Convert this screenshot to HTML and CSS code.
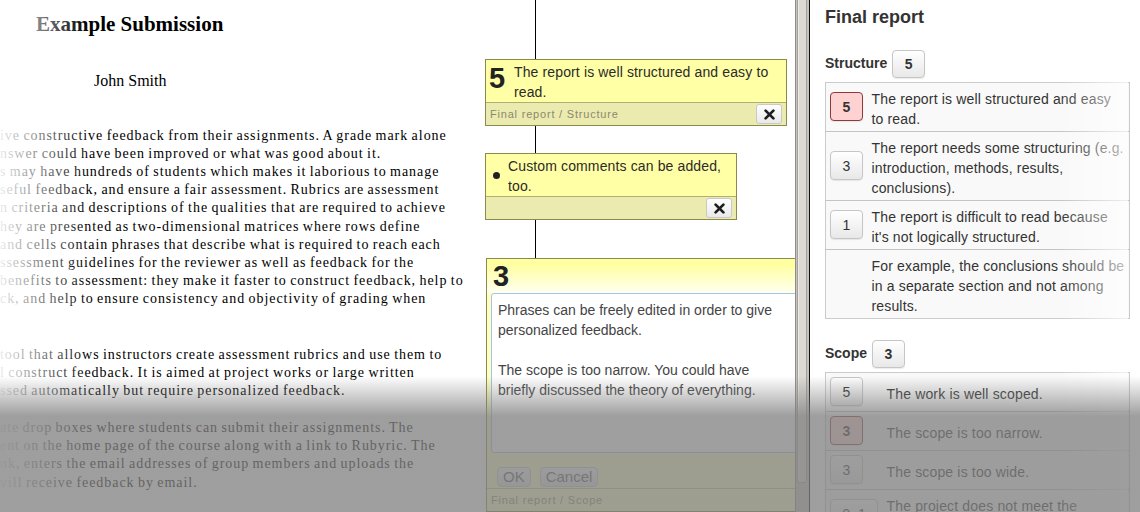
FILE: index.html
```html
<!DOCTYPE html>
<html lang="en">
<head>
<meta charset="utf-8">
<title>Rubyric – Example Submission</title>
<link rel="stylesheet" href="styles.css">
</head>
<body>
<div class="app">
  <main class="doc">
    <section class="page">
      <h1 class="title">Example Submission</h1>
      <p class="author">John Smith</p>
      <p class="para p1">ive constructive feedback from their assignments. A grade mark alone<br>nswer could have been improved or what was good about it.<br>s may have hundreds of students which makes it laborious to manage<br>seful feedback, and ensure a fair assessment. Rubrics are assessment<br>n criteria and descriptions of the qualities that are required to achieve<br>hey are presented as two-dimensional matrices where rows define<br>and cells contain phrases that describe what is required to reach each<br>ssessment guidelines for the reviewer as well as feedback for the<br>benefits to assessment: they make it faster to construct feedback, help to<br>ck, and help to ensure consistency and objectivity of grading when</p>
      <p class="para p2">tool that allows instructors create assessment rubrics and use them to<br>l construct feedback. It is aimed at project works or large written<br>ssed automatically but require personalized feedback.</p>
      <p class="para p3">ate drop boxes where students can submit their assignments. The<br>ent on the home page of the course along with a link to Rubyric. The<br>nk, enters the email addresses of group members and uploads the<br>vill receive feedback by email.</p>
    </section>

    <aside class="notes">
      <div class="note note-graded">
        <div class="note-head">
          <span class="note-grade">5</span>
          <span class="note-text">The report is well structured and easy to read.</span>
        </div>
        <div class="note-foot">
          <span class="note-path">Final report / Structure</span>
          <button class="close-btn" type="button" aria-label="Remove"><svg width="11" height="11" viewBox="0 0 11 11"><path d="M1.6 1.6 L9.4 9.4 M9.4 1.6 L1.6 9.4" stroke="#1e1e1e" stroke-width="2.7" stroke-linecap="round"/></svg></button>
        </div>
      </div>

      <div class="note note-custom">
        <div class="note-head">
          <span class="note-bullet"></span>
          <span class="note-text">Custom comments can be added, too.</span>
        </div>
        <div class="note-foot">
          <span class="note-path"></span>
          <button class="close-btn" type="button" aria-label="Remove"><svg width="11" height="11" viewBox="0 0 11 11"><path d="M1.6 1.6 L9.4 9.4 M9.4 1.6 L1.6 9.4" stroke="#1e1e1e" stroke-width="2.7" stroke-linecap="round"/></svg></button>
        </div>
      </div>

      <div class="note note-edit">
        <div class="edit-head"><span class="note-grade">3</span></div>
        <div class="edit-body">
          <div class="edit-area">Phrases can be freely edited in order to give<br>personalized feedback.<br><br>The scope is too narrow. You could have<br>briefly discussed the theory of everything.</div>
          <div class="edit-actions">
            <button class="act-btn" type="button">OK</button>
            <button class="act-btn" type="button">Cancel</button>
          </div>
        </div>
        <div class="note-foot">
          <span class="note-path">Final report / Scope</span>
        </div>
      </div>
    </aside>

    <div class="fade-left"></div>
  </main>

  <div class="scrollbar"><div class="thumb"></div></div>

  <section class="rubric">
    <h2 class="rubric-title">Final report</h2>

    <div class="crit-head">
      <span class="crit-name">Structure</span>
      <button class="grade-btn strong" type="button">5</button>
    </div>
    <table class="phrases">
      <colgroup><col class="col-btn"><col></colgroup>
      <tr>
        <td class="bcell"><button class="grade-btn selected" type="button">5</button></td>
        <td class="tcell">The report is well structured and easy<br>to read.</td>
      </tr>
      <tr>
        <td class="bcell"><button class="grade-btn" type="button">3</button></td>
        <td class="tcell">The report needs some structuring (e.g.<br>introduction, methods, results,<br>conclusions).</td>
      </tr>
      <tr>
        <td class="bcell"><button class="grade-btn" type="button">1</button></td>
        <td class="tcell">The report is difficult to read because<br>it's not logically structured.</td>
      </tr>
      <tr>
        <td class="bcell"></td>
        <td class="tcell">For example, the conclusions should be<br>in a separate section and not among<br>results.</td>
      </tr>
    </table>

    <div class="crit-head scope">
      <span class="crit-name">Scope</span>
      <button class="grade-btn strong" type="button">3</button>
    </div>
    <table class="phrases wide-btns">
      <colgroup><col class="col-btn"><col></colgroup>
      <tr>
        <td class="bcell"><button class="grade-btn" type="button">5</button></td>
        <td class="tcell">The work is well scoped.</td>
      </tr>
      <tr>
        <td class="bcell"><button class="grade-btn selected" type="button">3</button></td>
        <td class="tcell">The scope is too narrow.</td>
      </tr>
      <tr>
        <td class="bcell"><button class="grade-btn" type="button">3</button></td>
        <td class="tcell">The scope is too wide.</td>
      </tr>
      <tr>
        <td class="bcell"><button class="grade-btn wide" type="button">0–1</button></td>
        <td class="tcell">The project does not meet the<br>requirements.</td>
      </tr>
    </table>

    <div class="fade-right"></div>
  </section>
</div>
<div class="shade"></div>
</body>
</html>
```

FILE: styles.css
```css
html, body {
  margin: 0;
  padding: 0;
}
body {
  width: 1140px;
  height: 512px;
  overflow: hidden;
  background: #fff;
  font-family: "Liberation Sans", Arial, sans-serif;
  color: #333;
  position: relative;
}
button {
  font-family: "Liberation Sans", Arial, sans-serif;
}

.app {
  display: flex;
  height: 512px;
  overflow: hidden;
}

/* ---------- document ---------- */
.doc {
  width: 795px;
  flex: none;
  display: flex;
  position: relative;
  overflow: hidden;
  background: #fff;
}
.page {
  width: 485px;
  flex: none;
  font-family: "Liberation Serif", "Times New Roman", serif;
  color: #000;
}
.title {
  margin: 12px 0 0 36px;
  font-size: 21px;
  line-height: 24px;
  font-weight: bold;
}
.author {
  margin: 35px 0 0 94px;
  font-size: 16px;
  line-height: 20px;
}
.para {
  margin: 0;
  font-size: 14px;
  line-height: 18.2px;
  letter-spacing: 0.95px;
  word-spacing: -1px;
  white-space: nowrap;
}
.p1 { margin-top: 35.5px; }
.p2 { margin-top: 37px; }
.p3 { margin-top: 18.8px; }

/* ---------- annotations ---------- */
.notes {
  flex: 1;
  position: relative;
  padding-top: 59px;
  display: flex;
  flex-direction: column;
  align-items: flex-start;
}
.notes::before {
  content: "";
  position: absolute;
  left: 50px;
  top: 0;
  bottom: 0;
  width: 1px;
  background: #000;
}
.note {
  position: relative;
  border: 1px solid #8b8a4b;
  background: #ffffa6;
  color: #2b2b2b;
  font-size: 14px;
  line-height: 20px;
}
.note-text { letter-spacing: 0.13px; }
.note-graded { width: 300px; }
.note-custom { width: 250px; margin-top: 27px; }
.note-edit { width: 340px; margin-top: 38px; margin-left: 1px; }

.note-head {
  display: flex;
  align-items: flex-start;
  padding: 2px 4px 0 3px;
  min-height: 40px;
}
.note-grade {
  font-size: 29px;
  line-height: 29px;
  font-weight: bold;
  color: #222;
  margin-top: 2px;
  width: 16px;
  flex: none;
}
.note-graded .note-text { margin-left: 9px; }
.note-bullet {
  width: 7px;
  height: 7px;
  border-radius: 50%;
  background: #222;
  flex: none;
  margin: 16px 0 0 4px;
}
.note-custom .note-text { margin-left: 8px; }

.note-foot {
  display: flex;
  align-items: center;
  justify-content: space-between;
  height: 22px;
  padding: 0 4px;
  border-top: 1px solid #b2af74;
  background: #ecebaf;
}
.note-path {
  font-size: 11px;
  letter-spacing: 0.8px;
  color: #8a8a6c;
}
.close-btn {
  width: 26px;
  height: 20px;
  padding: 0;
  display: flex;
  align-items: center;
  justify-content: center;
  border: 1px solid #c9c9c9;
  border-radius: 3px;
  background: linear-gradient(#ffffff, #e9e9e9);
}

.edit-head {
  height: 31px;
  padding: 0 0 0 6px;
  background: linear-gradient(#ffff9a, #fffff0);
}
.edit-head .note-grade { display: block; margin-top: 3px; }
.edit-body {
  padding: 0 0 1px 4px;
  background: #ffffc4;
}
.edit-area {
  height: 146px;
  padding: 6px;
  border: 1px solid #9fc6e6;
  border-radius: 3px;
  background: #fff;
  color: #444;
  font-size: 14px;
  line-height: 20px;
  width: 318px;
  white-space: nowrap;
}
.edit-actions {
  display: flex;
  gap: 9px;
  margin-top: 14px;
  padding-left: 6px;
}
.act-btn {
  height: 20px;
  padding: 0 5px;
  font-size: 15px;
  line-height: 18px;
  color: #555;
  border: 1px solid #c4c4c4;
  border-radius: 4px;
  background: linear-gradient(#f4f4f4, #dedede);
}
.note-edit .note-foot { background: #ffffc4; border-top-color: #c4c197; }

.fade-left {
  position: absolute;
  left: 0;
  top: 0;
  bottom: 0;
  width: 88px;
  background: linear-gradient(to right, rgba(255,255,255,0.92), rgba(255,255,255,0));
  pointer-events: none;
}

/* ---------- scrollbar ---------- */
.scrollbar {
  width: 13px;
  flex: none;
  border-left: 1px solid #8f8d8a;
  background: #c6c3be;
  position: relative;
}
.thumb {
  margin-left: 1px;
  width: 8px;
  height: 485px;
  margin-top: -4px;
  background: #dcd9d4;
  border: 1px solid #a4a19c;
  border-radius: 0 0 3px 3px;
  box-shadow: inset 1px 0 0 #eeebe6;
}

/* ---------- rubric ---------- */
.rubric {
  flex: 1;
  position: relative;
  border-left: 1px solid #111;
  padding: 0 10px 0 15px;
  background: #fff;
  color: #333;
  font-size: 14px;
}
.rubric-title {
  margin: 6px 0 0;
  font-size: 18px;
  line-height: 22px;
  font-weight: bold;
}
.crit-head {
  display: flex;
  align-items: center;
  gap: 5px;
  margin-top: 22px;
}
.crit-head.scope { margin-top: 21px; }
.crit-name {
  font-weight: bold;
  font-size: 14px;
  margin-top: -2px;
}
.grade-btn {
  width: 33px;
  height: 29px;
  padding: 0;
  font-size: 14px;
  color: #333;
  border: 1px solid #c6c6c6;
  border-radius: 4px;
  background: linear-gradient(#ffffff, #e8e8e8);
  box-shadow: 0 1px 1px rgba(0,0,0,0.08);
}
.grade-btn.strong { height: 28px; font-weight: bold; }
.grade-btn.selected {
  background: #ffd2d2;
  border-color: #8e3a3a;
  font-weight: bold;
}
.grade-btn.wide { width: 48px; }

.phrases {
  width: 305px;
  table-layout: fixed;
  margin-top: 4px;
  border-collapse: collapse;
  border: 1px solid #cbcbcb;
  background: #f9f9f9;
}
.phrases .col-btn { width: 37px; }
.phrases.wide-btns .col-btn { width: 52px; }
.phrases tr + tr td { border-top: 1px solid #c4c4c4; }
.bcell {
  padding: 4px 0 5px 4px;
  vertical-align: middle;
}
.bcell .grade-btn { display: block; }
.tcell {
  padding: 6px 0 2px 9px;
  line-height: 20px;
  letter-spacing: 0.16px;
  white-space: nowrap;
  vertical-align: middle;
}

.fade-right {
  position: absolute;
  top: 0;
  bottom: 0;
  right: 12px;
  width: 70px;
  background: linear-gradient(to right, rgba(255,255,255,0), rgba(255,255,255,0.7));
  pointer-events: none;
}

/* ---------- bottom shade ---------- */
.shade {
  position: absolute;
  left: 0;
  right: 0;
  top: 376px;
  bottom: 0;
  background: linear-gradient(to bottom, rgba(128,128,128,0) 0px, rgba(128,128,128,0.76) 40px, rgba(128,128,128,0.76) 100%);
  pointer-events: none;
}
```
